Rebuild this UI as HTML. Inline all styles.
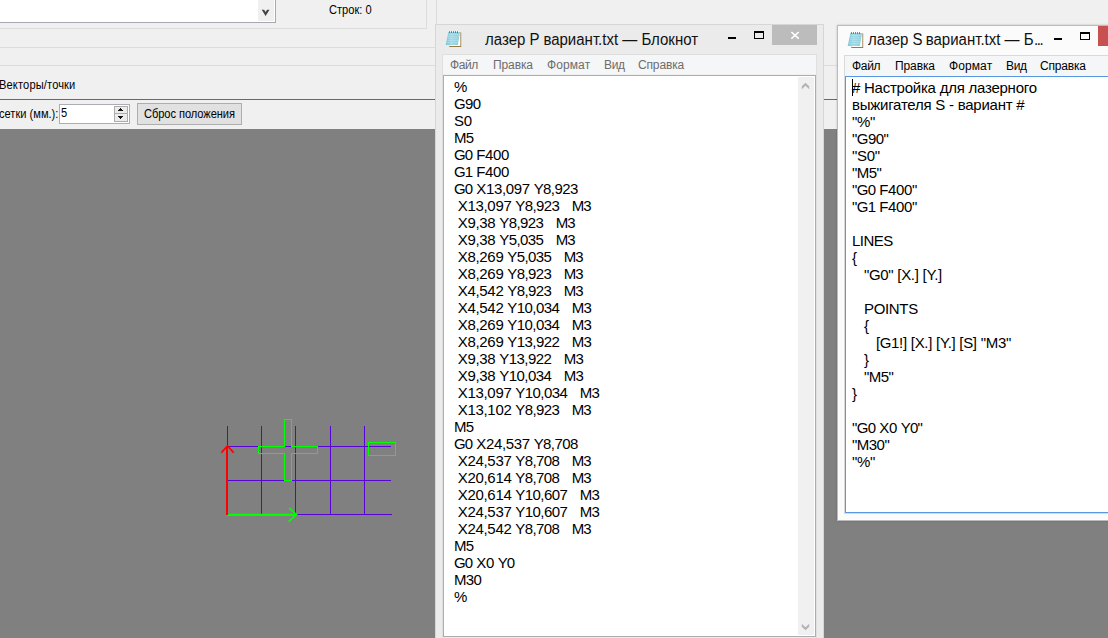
<!DOCTYPE html>
<html lang="ru">
<head>
<meta charset="utf-8">
<title>лазер — Блокнот</title>
<style>
html,body{margin:0;padding:0;}
body{width:1108px;height:638px;overflow:hidden;position:relative;background:#f0f0f0;font-family:"Liberation Sans",sans-serif;}
.abs{position:absolute;}
.t{position:absolute;white-space:pre;line-height:1;}
/* background application */
.app{font-size:12px;color:#000;}
.app .t{transform:scaleX(0.925);transform-origin:0 0;}
.hl{position:absolute;height:1px;background:#dcdcdc;}
.vl{position:absolute;width:1px;background:#dcdcdc;}
#canvas{left:0;top:129px;width:1108px;height:509px;background:#808080;}
/* notepad windows */
.win{position:absolute;box-sizing:border-box;}
.menu{position:absolute;height:19px;font-size:12px;}
.menu span{position:absolute;top:3px;white-space:pre;line-height:14px;}
.edit{position:absolute;box-sizing:border-box;background:#fff;overflow:hidden;}
.txt{position:absolute;margin:0;font-family:"Liberation Sans",sans-serif;font-size:15px;line-height:17px;color:#000;white-space:pre;letter-spacing:-0.33px;word-spacing:0;}
.title{position:absolute;white-space:pre;font-size:16px;line-height:18px;color:#111;transform:scaleX(0.9375);transform-origin:0 0;}
.txt i{font-style:normal;}
.txt .s{word-spacing:0.3px;}
.r .s{word-spacing:0.15px;}
</style>
</head>
<body>

<!-- ================= background application ================= -->
<div class="app">
  <!-- combo box -->
  <div class="abs" style="left:-5px;top:-4px;width:281px;height:27px;background:#fff;border:1px solid #a8a8b0;box-sizing:border-box;"></div>
  <div class="abs" style="left:258px;top:0;width:16px;height:21px;background:#f0f0f0;"></div>
  <svg class="abs" style="left:260px;top:8px" width="12" height="10" viewBox="0 0 12 10"><path d="M1.7 1.8 h2.4 l1.5 2.3 l1.5 -2.3 h2.4 l-3.9 6.2 z" fill="#444"/></svg>
  <div class="t" style="left:329px;top:4px;">Строк: 0</div>
  <!-- group box lines -->
  <div class="hl" style="left:0;top:28px;width:427px;"></div>
  <div class="vl" style="left:426px;top:0;height:28px;"></div>
  <div class="vl" style="left:436px;top:0;height:24px;"></div>
  <div class="hl" style="left:0;top:47px;width:436px;"></div>
  <div class="hl" style="left:0;top:65px;width:436px;"></div>
  <div class="hl" style="left:824px;top:65px;width:13px;"></div>
  <div class="t" style="left:-1px;top:79px;letter-spacing:0.15px;">Векторы/точки</div>
  <!-- dark separator -->
  <div class="abs" style="left:0;top:99px;width:1108px;height:1px;background:#696969;"></div>
  <!-- toolbar -->
  <div class="t" style="left:-1px;top:108px;">сетки (мм.):</div>
  <div class="abs" style="left:59px;top:104px;width:71px;height:20px;background:#fff;border:1px solid #abadb3;box-sizing:border-box;"></div>
  <div class="t" style="left:61px;top:107px;">5</div>
  <div class="abs" style="left:114px;top:106px;width:14px;height:8px;background:#ececec;border:1px solid #adadad;box-sizing:border-box;"></div>
  <div class="abs" style="left:114px;top:113px;width:14px;height:9px;background:#ececec;border:1px solid #adadad;box-sizing:border-box;"></div>
  <svg class="abs" style="left:118px;top:108px" width="5" height="11" viewBox="0 0 5 11" shape-rendering="crispEdges"><path d="M2 0h1v1h1v1h1v1H0V2h1V1h1Z M0 8h5v1H4v1H3v1H2v-1H1V9H0Z" fill="#111"/></svg>
  <div class="abs" style="left:137px;top:103px;width:105px;height:22px;background:#e1e1e1;border:1px solid #adadad;box-sizing:border-box;"></div>
  <div class="t" style="left:143.5px;top:108px;letter-spacing:-0.07px;">Сброс положения</div>
</div>

<!-- ================= drawing canvas ================= -->
<div id="canvas" class="abs"></div>
<svg class="abs" style="left:0;top:129px" width="1108" height="509" viewBox="0 129 1108 509">
  <g stroke="#5804d2" stroke-width="1" fill="none" shape-rendering="crispEdges">
    <path d="M227.5 426V515 M261.5 426V515 M295.5 426V515 M330.5 426V515 M364.5 426V515"/>
    <path d="M227 446.5H391 M227 480.5H391 M227 514.5H392"/>
  </g>
  <g stroke="#00ff00" stroke-width="1" fill="none" shape-rendering="crispEdges">
    <path d="M284.5 419.5H291.5V446.5H317.5V453.5H291.5V480.5H284.5V453.5H258.5V446.5H284.5Z"/>
    <rect x="368.5" y="442.5" width="27" height="13"/>
  </g>
  <g stroke="#00ff00" stroke-width="2.2" fill="none">
    <path d="M227 514.8H296.5"/>
    <path d="M289.3 508.1L296.6 514.7L288.5 521.6" stroke-width="1.6"/>
  </g>
  <g stroke="#ff0000" stroke-width="2" fill="none">
    <path d="M227 515V446"/>
    <path d="M221.4 452.6L227.5 446L233.6 452.6" stroke-width="1.7"/>
  </g>
</svg>

<!-- ================= left notepad window (inactive) ================= -->
<div class="win" style="left:435px;top:24px;width:389px;height:640px;background:#ebebeb;border:1px solid #d6d6d6;">
</div>
<svg class="abs" style="left:446px;top:31px;overflow:visible" width="17" height="18" viewBox="0 0 17 18">
  <defs><linearGradient id="g1" x1="0" y1="0" x2="1" y2="0"><stop offset="0" stop-color="#7cc4d8"/><stop offset="0.4" stop-color="#a2dae6"/><stop offset="1" stop-color="#8ccddd"/></linearGradient></defs>
  <path d="M14 1.2 H15.2 V15.9 H3.3 V14.5 H14 Z" fill="#937d45"/>
  <path d="M4 1 H14.35 V15.1 H3.5 V13 Z" fill="#fff"/>
  <path d="M2.6 0 H13 V1.2 H2.6 Z" fill="#f4f8fa"/>
  <path d="M2.4 1 H14 L11.9 13.9 H-0.3 Z" fill="url(#g1)"/>
  <path d="M2.5 3.5H12.9 M2.2 5.5H12.6 M1.8 7.5H12.3 M1.4 9.5H12 M1 11.5H11.7" stroke="#c4e9f1" stroke-width="0.8" opacity="0.55"/>
  <path d="M3 0.5h1v1.1h-1z M5 0.5h1v1.1h-1z M7 0.5h1v1.1h-1z M9 0.5h1v1.1h-1z M11 0.5h1v1.1h-1z" fill="#222"/>
</svg>
<div class="title" style="left:485px;top:31px;">лазер P вариант.txt — Блокнот</div>
<!-- caption buttons -->
<div class="abs" style="left:728px;top:37px;width:8px;height:2px;background:#000;"></div>
<div class="abs" style="left:754px;top:31px;width:10px;height:8px;border:1px solid #000;border-top-width:2px;box-sizing:border-box;"></div>
<div class="abs" style="left:772px;top:25px;width:45px;height:20px;background:#bcbcbc;"></div>
<svg class="abs" style="left:790px;top:31px" width="10" height="9" viewBox="0 0 10 9"><path d="M1.4 1L8.7 7.7M8.7 1L1.4 7.7" stroke="#fff" stroke-width="1.6"/></svg>
<div class="abs" style="left:442px;top:54px;width:375px;height:600px;border:1px solid #dfdfdf;box-sizing:border-box;"></div>
<!-- menu -->
<div class="menu" style="left:443px;top:55px;width:373px;background:#f5f6f7;color:#6d6d6d;">
  <span style="left:7px;letter-spacing:-0.4px;">Файл</span><span style="left:50px;letter-spacing:-0.1px;">Правка</span><span style="left:104px;letter-spacing:0.1px;">Формат</span><span style="left:161px;letter-spacing:-0.35px;">Вид</span><span style="left:195px;letter-spacing:-0.15px;">Справка</span>
</div>
<div class="abs" style="left:443px;top:74px;width:373px;height:1px;background:#f0f0f0;"></div>
<!-- text area -->
<div class="edit" style="left:443px;top:75px;width:373px;height:562px;border:1px solid #abadb3;"></div>
<pre class="txt" style="left:454px;top:78px;">%
<i style="letter-spacing:-0.65px">G90</i>
S0
<i style="letter-spacing:-0.81px">M5</i>
<i style="letter-spacing:-0.81px">G0</i> F400
<i style="letter-spacing:-0.81px">G1</i> F400
<i style="letter-spacing:-0.81px">G0</i> X13,097 <i style="letter-spacing:-0.59px">Y8,923</i>
 X13,097 <i style="letter-spacing:-0.59px">Y8,923</i><i class="s">   </i><i style="letter-spacing:-0.81px">M3</i>
 X9,38 <i style="letter-spacing:-0.59px">Y8,923</i><i class="s">   </i><i style="letter-spacing:-0.81px">M3</i>
 X9,38 <i style="letter-spacing:-0.59px">Y5,035</i><i class="s">   </i><i style="letter-spacing:-0.81px">M3</i>
 X8,269 <i style="letter-spacing:-0.59px">Y5,035</i><i class="s">   </i><i style="letter-spacing:-0.81px">M3</i>
 X8,269 <i style="letter-spacing:-0.59px">Y8,923</i><i class="s">   </i><i style="letter-spacing:-0.81px">M3</i>
 X4,542 <i style="letter-spacing:-0.59px">Y8,923</i><i class="s">   </i><i style="letter-spacing:-0.81px">M3</i>
 X4,542 <i style="letter-spacing:-0.55px">Y10,034</i><i class="s">   </i><i style="letter-spacing:-0.81px">M3</i>
 X8,269 <i style="letter-spacing:-0.55px">Y10,034</i><i class="s">   </i><i style="letter-spacing:-0.81px">M3</i>
 X8,269 <i style="letter-spacing:-0.55px">Y13,922</i><i class="s">   </i><i style="letter-spacing:-0.81px">M3</i>
 X9,38 <i style="letter-spacing:-0.55px">Y13,922</i><i class="s">   </i><i style="letter-spacing:-0.81px">M3</i>
 X9,38 <i style="letter-spacing:-0.55px">Y10,034</i><i class="s">   </i><i style="letter-spacing:-0.81px">M3</i>
 X13,097 <i style="letter-spacing:-0.55px">Y10,034</i><i class="s">   </i><i style="letter-spacing:-0.81px">M3</i>
 X13,102 <i style="letter-spacing:-0.59px">Y8,923</i><i class="s">   </i><i style="letter-spacing:-0.81px">M3</i>
<i style="letter-spacing:-0.81px">M5</i>
<i style="letter-spacing:-0.81px">G0</i> X24,537 <i style="letter-spacing:-0.59px">Y8,708</i>
 X24,537 <i style="letter-spacing:-0.59px">Y8,708</i><i class="s">   </i><i style="letter-spacing:-0.81px">M3</i>
 X20,614 <i style="letter-spacing:-0.59px">Y8,708</i><i class="s">   </i><i style="letter-spacing:-0.81px">M3</i>
 X20,614 <i style="letter-spacing:-0.55px">Y10,607</i><i class="s">   </i><i style="letter-spacing:-0.81px">M3</i>
 X24,537 <i style="letter-spacing:-0.55px">Y10,607</i><i class="s">   </i><i style="letter-spacing:-0.81px">M3</i>
 X24,542 <i style="letter-spacing:-0.59px">Y8,708</i><i class="s">   </i><i style="letter-spacing:-0.81px">M3</i>
<i style="letter-spacing:-0.81px">M5</i>
<i style="letter-spacing:-0.81px">G0</i> X0 <i style="letter-spacing:-1.11px">Y0</i>
<i style="letter-spacing:-0.65px">M30</i>
%</pre>
<!-- scrollbar -->
<div class="abs" style="left:798px;top:77px;width:16px;height:558px;background:#f0f0f0;"></div>
<svg class="abs" style="left:800px;top:81px" width="12" height="10" viewBox="800 81 12 10"><path d="M805.5 82.8 L809.2 86.3 V89.2 L805.5 85.7 L801.8 89.2 V86.3 Z" fill="#b4b4b4"/></svg>
<svg class="abs" style="left:800px;top:622px" width="12" height="10" viewBox="800 622 12 10"><path d="M805.5 630.2 L809.2 626.7 V623.8 L805.5 627.3 L801.8 623.8 V626.7 Z" fill="#b4b4b4"/></svg>

<!-- ================= right notepad window (active) ================= -->
<div class="win" style="left:837px;top:25px;width:313px;height:496px;background:#fbfbfb;border:1px solid #bcbcbc;box-shadow:0 0 2px rgba(0,0,0,0.22);"></div>
<svg class="abs" style="left:848px;top:32px;overflow:visible" width="17" height="18" viewBox="0 0 17 18">
  <defs><linearGradient id="g2" x1="0" y1="0" x2="1" y2="0"><stop offset="0" stop-color="#7cc4d8"/><stop offset="0.4" stop-color="#a2dae6"/><stop offset="1" stop-color="#8ccddd"/></linearGradient></defs>
  <path d="M14 1.2 H15.2 V15.9 H3.3 V14.5 H14 Z" fill="#937d45"/>
  <path d="M4 1 H14.35 V15.1 H3.5 V13 Z" fill="#fff"/>
  <path d="M2.6 0 H13 V1.2 H2.6 Z" fill="#f4f8fa"/>
  <path d="M2.4 1 H14 L11.9 13.9 H-0.3 Z" fill="url(#g2)"/>
  <path d="M2.5 3.5H12.9 M2.2 5.5H12.6 M1.8 7.5H12.3 M1.4 9.5H12 M1 11.5H11.7" stroke="#c4e9f1" stroke-width="0.8" opacity="0.55"/>
  <path d="M3 0.5h1v1.1h-1z M5 0.5h1v1.1h-1z M7 0.5h1v1.1h-1z M9 0.5h1v1.1h-1z M11 0.5h1v1.1h-1z" fill="#222"/>
</svg>
<div class="title" style="left:868px;top:31px;">лазер <span style="letter-spacing:-1px">S</span> вариант.txt — Б<span style="letter-spacing:-1.6px;margin-left:0.5px">...</span></div>
<div class="abs" style="left:1054px;top:38px;width:8px;height:2px;background:#000;"></div>
<div class="abs" style="left:1080px;top:32px;width:10px;height:8px;border:1px solid #000;border-top-width:2px;box-sizing:border-box;"></div>
<div class="abs" style="left:1098px;top:26px;width:45px;height:20px;background:#c75050;"></div>
<div class="abs" style="left:844px;top:55px;width:299px;height:459px;border:1px solid #dadada;box-sizing:border-box;"></div>
<div class="menu" style="left:845px;top:56px;width:297px;height:20px;background:#f5f6f7;color:#000;">
  <span style="left:7px;letter-spacing:-0.3px;">Файл</span><span style="left:50px;letter-spacing:-0.1px;">Правка</span><span style="left:104px;letter-spacing:0.1px;">Формат</span><span style="left:161px;letter-spacing:-0.35px;">Вид</span><span style="left:195px;letter-spacing:-0.2px;">Справка</span>
</div>
<div class="edit" style="left:845px;top:76px;width:297px;height:437px;border:1px solid #5599e4;"></div>
<div class="abs" style="left:852px;top:79px;width:1px;height:17px;background:#000;"></div>
<pre class="txt r" style="left:852px;top:79px;"><span style="letter-spacing:-0.24px"># Настройка для лазерного
выжигателя S - вариант #</span>
"%"
<i style="letter-spacing:-0.52px">"G90"</i>
"S0"
<i style="letter-spacing:-0.57px">"M5"</i>
<i style="letter-spacing:-0.65px">"G0</i> F400"
<i style="letter-spacing:-0.65px">"G1</i> F400"

<i style="letter-spacing:-0.55px">LINES</i>
{
<i class="s">   </i><i style="letter-spacing:-0.33px;word-spacing:0.2px">"G0" [X.] [Y.]</i>

<i class="s">   </i>POINTS
<i class="s">   </i>{
<i class="s">      </i><i style="letter-spacing:-0.33px;word-spacing:0.2px">[G1!] [X.] [Y.] [S] "M3"</i>
<i class="s">   </i>}
<i class="s">   </i><i style="letter-spacing:-0.57px">"M5"</i>
}

<i style="letter-spacing:-0.65px">"G0</i> X0 <i style="letter-spacing:-0.85px">Y0"</i>
<i style="letter-spacing:-0.52px">"M30"</i>
"%"</pre>

</body>
</html>
